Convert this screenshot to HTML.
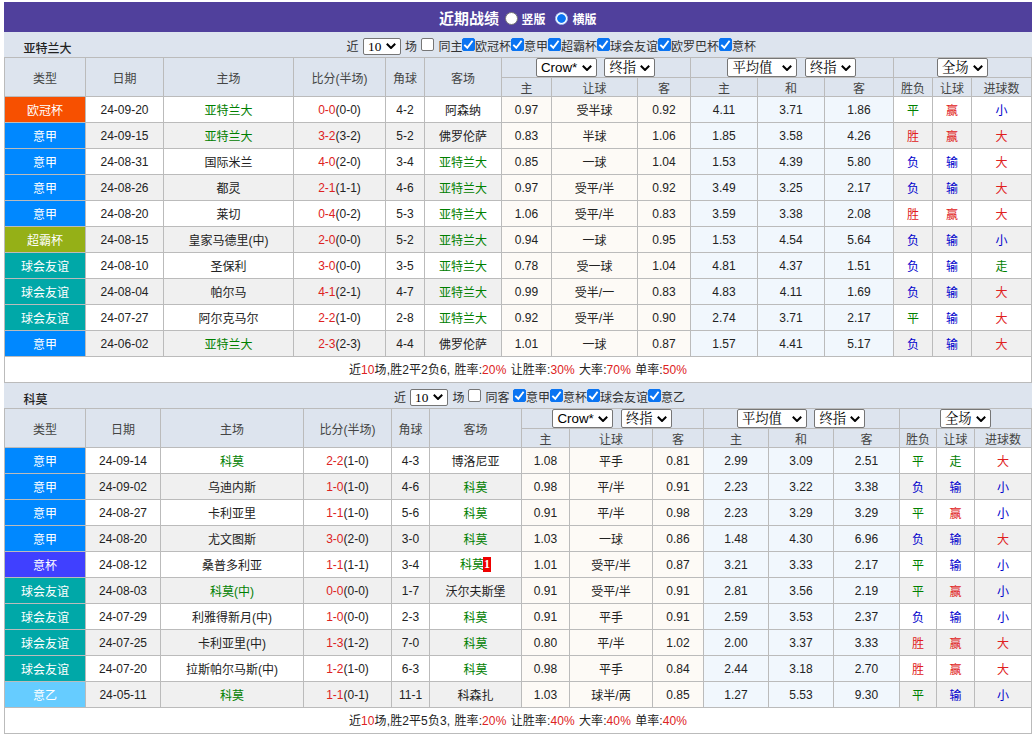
<!DOCTYPE html>
<html lang="zh-CN"><head><meta charset="utf-8"><title>近期战绩</title>
<style>
html,body{margin:0;padding:0;background:#fff;}
body{font-family:"Liberation Sans","Noto Sans CJK SC",sans-serif;font-size:12px;color:#222;width:1032px;height:736px;overflow:hidden;position:relative;}
#w{position:absolute;left:4px;top:2px;width:1028px;}
.title{height:30px;background:#50409c;color:#fff;white-space:nowrap;font-size:12px;position:relative;}
.title b{position:absolute;top:1.5px;line-height:30px;font-size:15px;font-weight:bold;}
.title .lb{position:absolute;top:3px;line-height:30px;font-weight:700;}
.rd{position:absolute;top:10px;width:11px;height:11px;border-radius:50%;background:#fff;border:1px solid #767676;box-sizing:content-box;}
.rd.on{border:1px solid #a9c9f8;background:radial-gradient(circle,#0a74f2 0,#0a74f2 3.9px,#fff 4.7px);}
.flt{height:25px;background:#dde4ee;line-height:25px;white-space:nowrap;position:relative;}
.flt .tn{position:absolute;left:19.5px;top:4.5px;font-weight:500;color:#222;}
.flt .fc{position:absolute;top:0;height:25px;color:#333;}
.flt .fc>span{position:absolute;top:3px;}
.flt .fc>span.sel{top:6px;}
.flt .fc>span.cb{top:6px;}
.cb{display:inline-block;width:11px;height:11px;border:1px solid #767676;border-radius:2px;background:#fff;box-sizing:content-box;}
.cb.on{background:#0a74f2;border-color:#0a74f2;}
.cb svg{display:block;position:absolute;left:-1px;top:-1px;}
.sel{display:inline-block;height:19px;border:1px solid #767676;border-radius:2px;background:#fff;vertical-align:middle;box-sizing:border-box;position:relative;text-align:left;line-height:17px;font-size:13.33px;color:#000;font-family:"Liberation Sans","Noto Serif CJK SC",serif;}
.sel.s10{font-family:"Liberation Serif","Noto Serif CJK SC",serif;font-size:13.33px;}
.sel .st{position:absolute;left:4px;top:0;}
.sel .ar{position:absolute;right:4px;top:6px;}
.sel.s10{height:17px;line-height:15px;}
.sel.s10 .ar{top:4px;}
table.t{border-collapse:collapse;table-layout:fixed;width:1027px;margin:0;}
table.t td,table.t th{border:1px solid #bbb;padding:0;text-align:center;font-weight:normal;overflow:hidden;white-space:nowrap;}
table.t th{background:#dde4ee;color:#444;}
tr.h1{height:20px;} tr.h2{height:19px;}
tr.r0,tr.r1,tr.sum{height:26px;}
tr.r0 td{background:#fff;} tr.r1 td{background:#f0f0f0;}
tr.r0 td.wa,tr.r1 td.wa{background:#fdfaf6;}
tr.r0 td.co,tr.r1 td.co{background:#f1f7fd;}
td.lg{color:#fff;}
tr td.c-ogb{background:#f75000;} tr td.c-yj{background:#0088ff;} tr td.c-cbb{background:#95b017;}
tr td.c-qh{background:#00a8a8;} tr td.c-yb{background:#4040ff;} tr td.c-yy{background:#66ccff;}
.g{color:#008000;} td.g{color:#008000;} td.r{color:#e02020;} td.b{color:#0000cc;}
.sc{color:#d22;}
.rc{display:inline-block;background:#e00;color:#fff;font-family:"Liberation Serif",serif;font-weight:bold;font-size:12px;line-height:15px;width:8px;height:15px;text-align:center;vertical-align:middle;position:relative;top:-2px;margin-left:-1px;}
tr.sum td{background:#fff;letter-spacing:0.1px;word-spacing:0.8px;padding-bottom:2px;}
.red{color:#d22;}
.gp{display:inline-block;width:7.5px;}
table.t th.h2s{padding-right:0.6px;}
</style></head><body>
<div id="w">
<div class="title"><b style="left:435px">近期战绩</b><span class="rd" style="left:501px"></span><span class="lb" style="left:517.5px">竖版</span><span class="rd on" style="left:551px"></span><span class="lb" style="left:568.5px">横版</span></div>
<div class="flt"><span class="tn">亚特兰大</span><span class="fc" style="left:0"><span style="left:342.5px">近</span><span class="sel s10" style="left:359px;width:38px"><span class="st">10</span><svg class="ar" viewBox="0 0 10 6" width="10" height="6"><path d="M0.8 0.8 L5 5 L9.2 0.8" fill="none" stroke="#000" stroke-width="2"/></svg></span><span style="left:401px">场</span><span style="left:417px" class="cb"></span><span style="left:434.5px">同主</span><span style="left:458px" class="cb on"><svg viewBox="0 0 13 13" width="13" height="13"><path d="M2.3 6.9 L5.3 9.8 L10.6 2.8" fill="none" stroke="#fff" stroke-width="1.9"/></svg></span><span style="left:471px">欧冠杯</span><span style="left:507px" class="cb on"><svg viewBox="0 0 13 13" width="13" height="13"><path d="M2.3 6.9 L5.3 9.8 L10.6 2.8" fill="none" stroke="#fff" stroke-width="1.9"/></svg></span><span style="left:520px">意甲</span><span style="left:544px" class="cb on"><svg viewBox="0 0 13 13" width="13" height="13"><path d="M2.3 6.9 L5.3 9.8 L10.6 2.8" fill="none" stroke="#fff" stroke-width="1.9"/></svg></span><span style="left:557px">超霸杯</span><span style="left:593px" class="cb on"><svg viewBox="0 0 13 13" width="13" height="13"><path d="M2.3 6.9 L5.3 9.8 L10.6 2.8" fill="none" stroke="#fff" stroke-width="1.9"/></svg></span><span style="left:606px">球会友谊</span><span style="left:654px" class="cb on"><svg viewBox="0 0 13 13" width="13" height="13"><path d="M2.3 6.9 L5.3 9.8 L10.6 2.8" fill="none" stroke="#fff" stroke-width="1.9"/></svg></span><span style="left:667px">欧罗巴杯</span><span style="left:715px" class="cb on"><svg viewBox="0 0 13 13" width="13" height="13"><path d="M2.3 6.9 L5.3 9.8 L10.6 2.8" fill="none" stroke="#fff" stroke-width="1.9"/></svg></span><span style="left:728px">意杯</span></span></div>
<table class="t"><colgroup><col style="width:81px"><col style="width:78px"><col style="width:130px"><col style="width:92px"><col style="width:39px"><col style="width:77px"><col style="width:50px"><col style="width:86px"><col style="width:53px"><col style="width:67px"><col style="width:67px"><col style="width:69px"><col style="width:39px"><col style="width:39px"><col style="width:60px"></colgroup>
<tr class="h1"><th rowspan="2">类型</th><th rowspan="2">日期</th><th rowspan="2">主场</th><th rowspan="2">比分(半场)</th><th rowspan="2">角球</th><th rowspan="2">客场</th><th colspan="3" class="hs h2s"><span class="sel " style="width:61px"><span class="st">Crow*</span><svg class="ar" viewBox="0 0 10 6" width="10" height="6"><path d="M0.8 0.8 L5 5 L9.2 0.8" fill="none" stroke="#000" stroke-width="2"/></svg></span><i class="gp"></i><span class="sel " style="width:51px"><span class="st">终指</span><svg class="ar" viewBox="0 0 10 6" width="10" height="6"><path d="M0.8 0.8 L5 5 L9.2 0.8" fill="none" stroke="#000" stroke-width="2"/></svg></span></th><th colspan="3" class="hs h2s"><span class="sel wide" style="width:70px"><span class="st">平均值</span><svg class="ar" viewBox="0 0 10 6" width="10" height="6"><path d="M0.8 0.8 L5 5 L9.2 0.8" fill="none" stroke="#000" stroke-width="2"/></svg></span><i class="gp"></i><span class="sel " style="width:51px"><span class="st">终指</span><svg class="ar" viewBox="0 0 10 6" width="10" height="6"><path d="M0.8 0.8 L5 5 L9.2 0.8" fill="none" stroke="#000" stroke-width="2"/></svg></span></th><th colspan="3" class="hs"><span class="sel " style="width:51px"><span class="st">全场</span><svg class="ar" viewBox="0 0 10 6" width="10" height="6"><path d="M0.8 0.8 L5 5 L9.2 0.8" fill="none" stroke="#000" stroke-width="2"/></svg></span></th></tr>
<tr class="h2"><th>主</th><th>让球</th><th>客</th><th>主</th><th>和</th><th>客</th><th>胜负</th><th>让球</th><th>进球数</th></tr>
<tr class="r0"><td class="lg c-ogb">欧冠杯</td><td>24-09-20</td><td><span class="g">亚特兰大</span></td><td><span class="sc">0-0</span>(0-0)</td><td>4-2</td><td>阿森纳</td><td class="wa">0.97</td><td class="wa">受半球</td><td class="wa">0.92</td><td class="co">4.11</td><td class="co">3.71</td><td class="co">1.86</td><td class="g">平</td><td class="r">赢</td><td class="b">小</td></tr>
<tr class="r1"><td class="lg c-yj">意甲</td><td>24-09-15</td><td><span class="g">亚特兰大</span></td><td><span class="sc">3-2</span>(3-2)</td><td>5-2</td><td>佛罗伦萨</td><td class="wa">0.83</td><td class="wa">半球</td><td class="wa">1.06</td><td class="co">1.85</td><td class="co">3.58</td><td class="co">4.26</td><td class="r">胜</td><td class="r">赢</td><td class="r">大</td></tr>
<tr class="r0"><td class="lg c-yj">意甲</td><td>24-08-31</td><td>国际米兰</td><td><span class="sc">4-0</span>(2-0)</td><td>3-4</td><td><span class="g">亚特兰大</span></td><td class="wa">0.85</td><td class="wa">一球</td><td class="wa">1.04</td><td class="co">1.53</td><td class="co">4.39</td><td class="co">5.80</td><td class="b">负</td><td class="b">输</td><td class="r">大</td></tr>
<tr class="r1"><td class="lg c-yj">意甲</td><td>24-08-26</td><td>都灵</td><td><span class="sc">2-1</span>(1-1)</td><td>4-6</td><td><span class="g">亚特兰大</span></td><td class="wa">0.97</td><td class="wa">受平/半</td><td class="wa">0.92</td><td class="co">3.49</td><td class="co">3.25</td><td class="co">2.17</td><td class="b">负</td><td class="b">输</td><td class="r">大</td></tr>
<tr class="r0"><td class="lg c-yj">意甲</td><td>24-08-20</td><td>莱切</td><td><span class="sc">0-4</span>(0-2)</td><td>5-3</td><td><span class="g">亚特兰大</span></td><td class="wa">1.06</td><td class="wa">受平/半</td><td class="wa">0.83</td><td class="co">3.59</td><td class="co">3.38</td><td class="co">2.08</td><td class="r">胜</td><td class="r">赢</td><td class="r">大</td></tr>
<tr class="r1"><td class="lg c-cbb">超霸杯</td><td>24-08-15</td><td>皇家马德里(中)</td><td><span class="sc">2-0</span>(0-0)</td><td>5-2</td><td><span class="g">亚特兰大</span></td><td class="wa">0.94</td><td class="wa">一球</td><td class="wa">0.95</td><td class="co">1.53</td><td class="co">4.54</td><td class="co">5.64</td><td class="b">负</td><td class="b">输</td><td class="b">小</td></tr>
<tr class="r0"><td class="lg c-qh">球会友谊</td><td>24-08-10</td><td>圣保利</td><td><span class="sc">3-0</span>(0-0)</td><td>3-5</td><td><span class="g">亚特兰大</span></td><td class="wa">0.78</td><td class="wa">受一球</td><td class="wa">1.04</td><td class="co">4.81</td><td class="co">4.37</td><td class="co">1.51</td><td class="b">负</td><td class="b">输</td><td class="g">走</td></tr>
<tr class="r1"><td class="lg c-qh">球会友谊</td><td>24-08-04</td><td>帕尔马</td><td><span class="sc">4-1</span>(2-1)</td><td>4-7</td><td><span class="g">亚特兰大</span></td><td class="wa">0.99</td><td class="wa">受半/一</td><td class="wa">0.83</td><td class="co">4.83</td><td class="co">4.11</td><td class="co">1.69</td><td class="b">负</td><td class="b">输</td><td class="r">大</td></tr>
<tr class="r0"><td class="lg c-qh">球会友谊</td><td>24-07-27</td><td>阿尔克马尔</td><td><span class="sc">2-2</span>(1-0)</td><td>2-8</td><td><span class="g">亚特兰大</span></td><td class="wa">0.92</td><td class="wa">受平/半</td><td class="wa">0.90</td><td class="co">2.74</td><td class="co">3.71</td><td class="co">2.17</td><td class="g">平</td><td class="b">输</td><td class="r">大</td></tr>
<tr class="r1"><td class="lg c-yj">意甲</td><td>24-06-02</td><td><span class="g">亚特兰大</span></td><td><span class="sc">2-3</span>(2-3)</td><td>4-4</td><td>佛罗伦萨</td><td class="wa">1.01</td><td class="wa">一球</td><td class="wa">0.87</td><td class="co">1.57</td><td class="co">4.41</td><td class="co">5.17</td><td class="b">负</td><td class="b">输</td><td class="r">大</td></tr>
<tr class="sum"><td colspan="15">近<span class="red">10</span>场,胜2平2负6, 胜率:<span class="red">20%</span> 让胜率:<span class="red">30%</span> 大率:<span class="red">70%</span> 单率:<span class="red">50%</span></td></tr>
</table>
<div class="flt"><span class="tn">科莫</span><span class="fc" style="left:0"><span style="left:390px">近</span><span class="sel s10" style="left:406px;width:38px"><span class="st">10</span><svg class="ar" viewBox="0 0 10 6" width="10" height="6"><path d="M0.8 0.8 L5 5 L9.2 0.8" fill="none" stroke="#000" stroke-width="2"/></svg></span><span style="left:448.5px">场</span><span style="left:464px" class="cb"></span><span style="left:481.5px">同客</span><span style="left:509px" class="cb on"><svg viewBox="0 0 13 13" width="13" height="13"><path d="M2.3 6.9 L5.3 9.8 L10.6 2.8" fill="none" stroke="#fff" stroke-width="1.9"/></svg></span><span style="left:522px">意甲</span><span style="left:546px" class="cb on"><svg viewBox="0 0 13 13" width="13" height="13"><path d="M2.3 6.9 L5.3 9.8 L10.6 2.8" fill="none" stroke="#fff" stroke-width="1.9"/></svg></span><span style="left:559px">意杯</span><span style="left:583px" class="cb on"><svg viewBox="0 0 13 13" width="13" height="13"><path d="M2.3 6.9 L5.3 9.8 L10.6 2.8" fill="none" stroke="#fff" stroke-width="1.9"/></svg></span><span style="left:596px">球会友谊</span><span style="left:644px" class="cb on"><svg viewBox="0 0 13 13" width="13" height="13"><path d="M2.3 6.9 L5.3 9.8 L10.6 2.8" fill="none" stroke="#fff" stroke-width="1.9"/></svg></span><span style="left:657px">意乙</span></span></div>
<table class="t"><colgroup><col style="width:81px"><col style="width:75px"><col style="width:143px"><col style="width:88px"><col style="width:38px"><col style="width:92px"><col style="width:48px"><col style="width:83px"><col style="width:51px"><col style="width:65px"><col style="width:65px"><col style="width:66px"><col style="width:37px"><col style="width:38px"><col style="width:57px"></colgroup>
<tr class="h1"><th rowspan="2">类型</th><th rowspan="2">日期</th><th rowspan="2">主场</th><th rowspan="2">比分(半场)</th><th rowspan="2">角球</th><th rowspan="2">客场</th><th colspan="3" class="hs h2s"><span class="sel " style="width:61px"><span class="st">Crow*</span><svg class="ar" viewBox="0 0 10 6" width="10" height="6"><path d="M0.8 0.8 L5 5 L9.2 0.8" fill="none" stroke="#000" stroke-width="2"/></svg></span><i class="gp"></i><span class="sel " style="width:51px"><span class="st">终指</span><svg class="ar" viewBox="0 0 10 6" width="10" height="6"><path d="M0.8 0.8 L5 5 L9.2 0.8" fill="none" stroke="#000" stroke-width="2"/></svg></span></th><th colspan="3" class="hs h2s"><span class="sel wide" style="width:70px"><span class="st">平均值</span><svg class="ar" viewBox="0 0 10 6" width="10" height="6"><path d="M0.8 0.8 L5 5 L9.2 0.8" fill="none" stroke="#000" stroke-width="2"/></svg></span><i class="gp"></i><span class="sel " style="width:51px"><span class="st">终指</span><svg class="ar" viewBox="0 0 10 6" width="10" height="6"><path d="M0.8 0.8 L5 5 L9.2 0.8" fill="none" stroke="#000" stroke-width="2"/></svg></span></th><th colspan="3" class="hs"><span class="sel " style="width:51px"><span class="st">全场</span><svg class="ar" viewBox="0 0 10 6" width="10" height="6"><path d="M0.8 0.8 L5 5 L9.2 0.8" fill="none" stroke="#000" stroke-width="2"/></svg></span></th></tr>
<tr class="h2"><th>主</th><th>让球</th><th>客</th><th>主</th><th>和</th><th>客</th><th>胜负</th><th>让球</th><th>进球数</th></tr>
<tr class="r0"><td class="lg c-yj">意甲</td><td>24-09-14</td><td><span class="g">科莫</span></td><td><span class="sc">2-2</span>(1-0)</td><td>4-3</td><td>博洛尼亚</td><td class="wa">1.08</td><td class="wa">平手</td><td class="wa">0.81</td><td class="co">2.99</td><td class="co">3.09</td><td class="co">2.51</td><td class="g">平</td><td class="g">走</td><td class="r">大</td></tr>
<tr class="r1"><td class="lg c-yj">意甲</td><td>24-09-02</td><td>乌迪内斯</td><td><span class="sc">1-0</span>(1-0)</td><td>4-6</td><td><span class="g">科莫</span></td><td class="wa">0.98</td><td class="wa">平/半</td><td class="wa">0.91</td><td class="co">2.23</td><td class="co">3.22</td><td class="co">3.38</td><td class="b">负</td><td class="b">输</td><td class="b">小</td></tr>
<tr class="r0"><td class="lg c-yj">意甲</td><td>24-08-27</td><td>卡利亚里</td><td><span class="sc">1-1</span>(1-0)</td><td>5-6</td><td><span class="g">科莫</span></td><td class="wa">0.91</td><td class="wa">平/半</td><td class="wa">0.98</td><td class="co">2.23</td><td class="co">3.29</td><td class="co">3.29</td><td class="g">平</td><td class="r">赢</td><td class="b">小</td></tr>
<tr class="r1"><td class="lg c-yj">意甲</td><td>24-08-20</td><td>尤文图斯</td><td><span class="sc">3-0</span>(2-0)</td><td>3-0</td><td><span class="g">科莫</span></td><td class="wa">1.03</td><td class="wa">一球</td><td class="wa">0.86</td><td class="co">1.48</td><td class="co">4.30</td><td class="co">6.96</td><td class="b">负</td><td class="b">输</td><td class="r">大</td></tr>
<tr class="r0"><td class="lg c-yb">意杯</td><td>24-08-12</td><td>桑普多利亚</td><td><span class="sc">1-1</span>(1-1)</td><td>3-4</td><td><span class="g">科莫</span><span class="rc">1</span></td><td class="wa">1.01</td><td class="wa">受平/半</td><td class="wa">0.87</td><td class="co">3.21</td><td class="co">3.33</td><td class="co">2.17</td><td class="g">平</td><td class="b">输</td><td class="b">小</td></tr>
<tr class="r1"><td class="lg c-qh">球会友谊</td><td>24-08-03</td><td><span class="g">科莫(中)</span></td><td><span class="sc">0-0</span>(0-0)</td><td>1-7</td><td>沃尔夫斯堡</td><td class="wa">0.91</td><td class="wa">受平/半</td><td class="wa">0.91</td><td class="co">2.81</td><td class="co">3.56</td><td class="co">2.19</td><td class="g">平</td><td class="r">赢</td><td class="b">小</td></tr>
<tr class="r0"><td class="lg c-qh">球会友谊</td><td>24-07-29</td><td>利雅得新月(中)</td><td><span class="sc">1-0</span>(0-0)</td><td>2-3</td><td><span class="g">科莫</span></td><td class="wa">0.91</td><td class="wa">平手</td><td class="wa">0.91</td><td class="co">2.59</td><td class="co">3.53</td><td class="co">2.37</td><td class="b">负</td><td class="b">输</td><td class="b">小</td></tr>
<tr class="r1"><td class="lg c-qh">球会友谊</td><td>24-07-25</td><td>卡利亚里(中)</td><td><span class="sc">1-3</span>(1-2)</td><td>7-0</td><td><span class="g">科莫</span></td><td class="wa">0.80</td><td class="wa">平/半</td><td class="wa">1.02</td><td class="co">2.00</td><td class="co">3.37</td><td class="co">3.33</td><td class="r">胜</td><td class="r">赢</td><td class="r">大</td></tr>
<tr class="r0"><td class="lg c-qh">球会友谊</td><td>24-07-20</td><td>拉斯帕尔马斯(中)</td><td><span class="sc">1-2</span>(1-0)</td><td>6-3</td><td><span class="g">科莫</span></td><td class="wa">0.98</td><td class="wa">平手</td><td class="wa">0.84</td><td class="co">2.44</td><td class="co">3.18</td><td class="co">2.70</td><td class="r">胜</td><td class="r">赢</td><td class="r">大</td></tr>
<tr class="r1"><td class="lg c-yy">意乙</td><td>24-05-11</td><td><span class="g">科莫</span></td><td><span class="sc">1-1</span>(0-1)</td><td>11-1</td><td>科森扎</td><td class="wa">1.03</td><td class="wa">球半/两</td><td class="wa">0.85</td><td class="co">1.27</td><td class="co">5.53</td><td class="co">9.30</td><td class="g">平</td><td class="b">输</td><td class="b">小</td></tr>
<tr class="sum"><td colspan="15">近<span class="red">10</span>场,胜2平5负3, 胜率:<span class="red">20%</span> 让胜率:<span class="red">40%</span> 大率:<span class="red">40%</span> 单率:<span class="red">40%</span></td></tr>
</table>
</div>
</body></html>
